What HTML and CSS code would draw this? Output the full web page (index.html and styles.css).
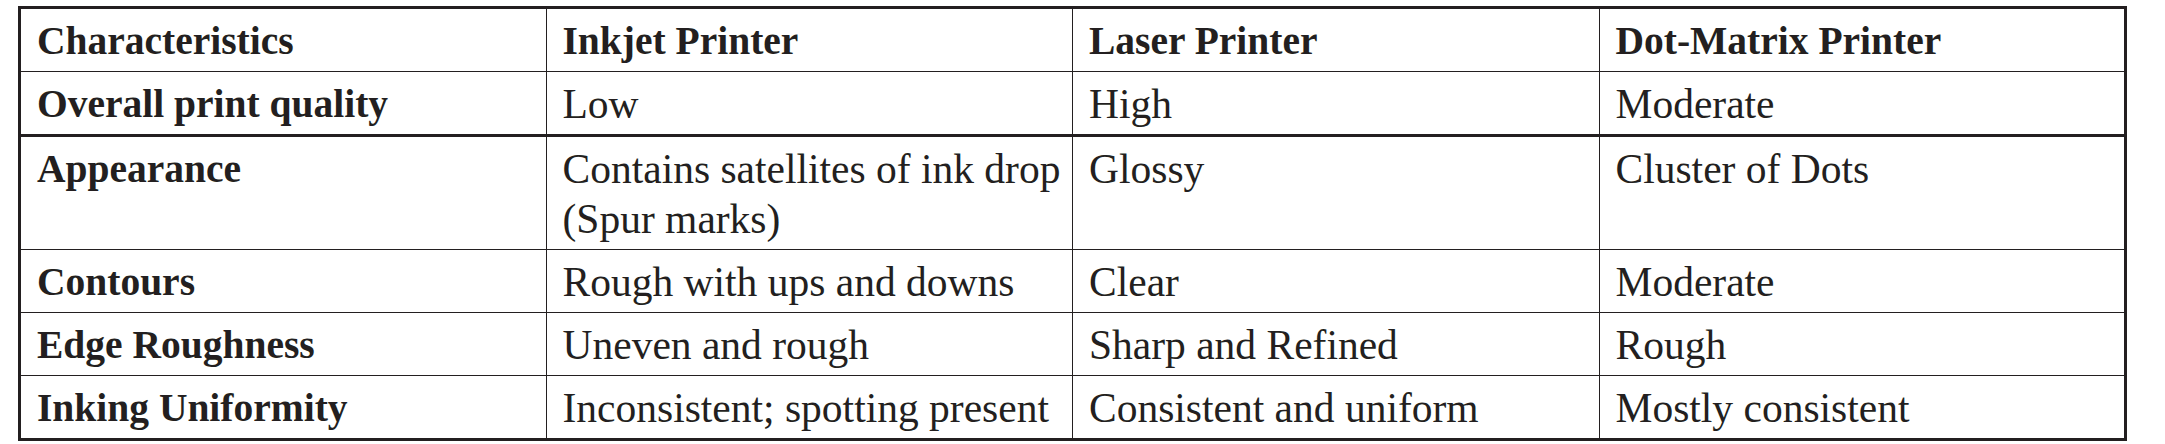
FILE: index.html
```html
<!DOCTYPE html>
<html lang="en">
<head>
<meta charset="utf-8">
<title>Printer characteristics</title>
<link rel="stylesheet" href="styles.css">
</head>
<body>
<table class="cmp">
  <colgroup>
    <col class="c1"><col class="c2"><col class="c3"><col class="c4">
  </colgroup>
  <thead>
    <tr class="head">
      <th>Characteristics</th>
      <th>Inkjet Printer</th>
      <th>Laser Printer</th>
      <th>Dot-Matrix Printer</th>
    </tr>
  </thead>
  <tbody>
    <tr class="first">
      <th>Overall print quality</th>
      <td>Low</td>
      <td>High</td>
      <td>Moderate</td>
    </tr>
    <tr>
      <th>Appearance</th>
      <td>Contains satellites of ink drop<br>(Spur marks)</td>
      <td>Glossy</td>
      <td>Cluster of Dots</td>
    </tr>
    <tr>
      <th>Contours</th>
      <td>Rough with ups and downs</td>
      <td>Clear</td>
      <td>Moderate</td>
    </tr>
    <tr>
      <th>Edge Roughness</th>
      <td>Uneven and rough</td>
      <td>Sharp and Refined</td>
      <td>Rough</td>
    </tr>
    <tr>
      <th>Inking Uniformity</th>
      <td>Inconsistent; spotting present</td>
      <td>Consistent and uniform</td>
      <td>Mostly consistent</td>
    </tr>
  </tbody>
</table>
</body>
</html>
```

FILE: styles.css
```css
html, body {
  margin: 0;
  padding: 0;
  background: #ffffff;
}

body {
  padding: 6px 0 0 18px;
  font-family: "Liberation Serif", "Times New Roman", serif;
  color: #231f20;
}

.cmp {
  border-collapse: collapse;
  table-layout: fixed;
  width: 2109px;
  border: 3px solid #231f20;
}

.cmp .c1, .cmp .c2, .cmp .c3, .cmp .c4 {
  width: 25%;
}

.cmp th,
.cmp td {
  text-align: left;
  vertical-align: top;
  padding: 7px 15px 5px 16px;
  line-height: 50px;
  border: 1.5px solid #231f20;
  white-space: nowrap;
}

.cmp th {
  font-weight: bold;
  font-size: 39.5px;
}

.cmp td {
  font-weight: normal;
  font-size: 41.5px;
}

.cmp tr.first th,
.cmp tr.first td {
  border-bottom: 3px solid #231f20;
}
```
